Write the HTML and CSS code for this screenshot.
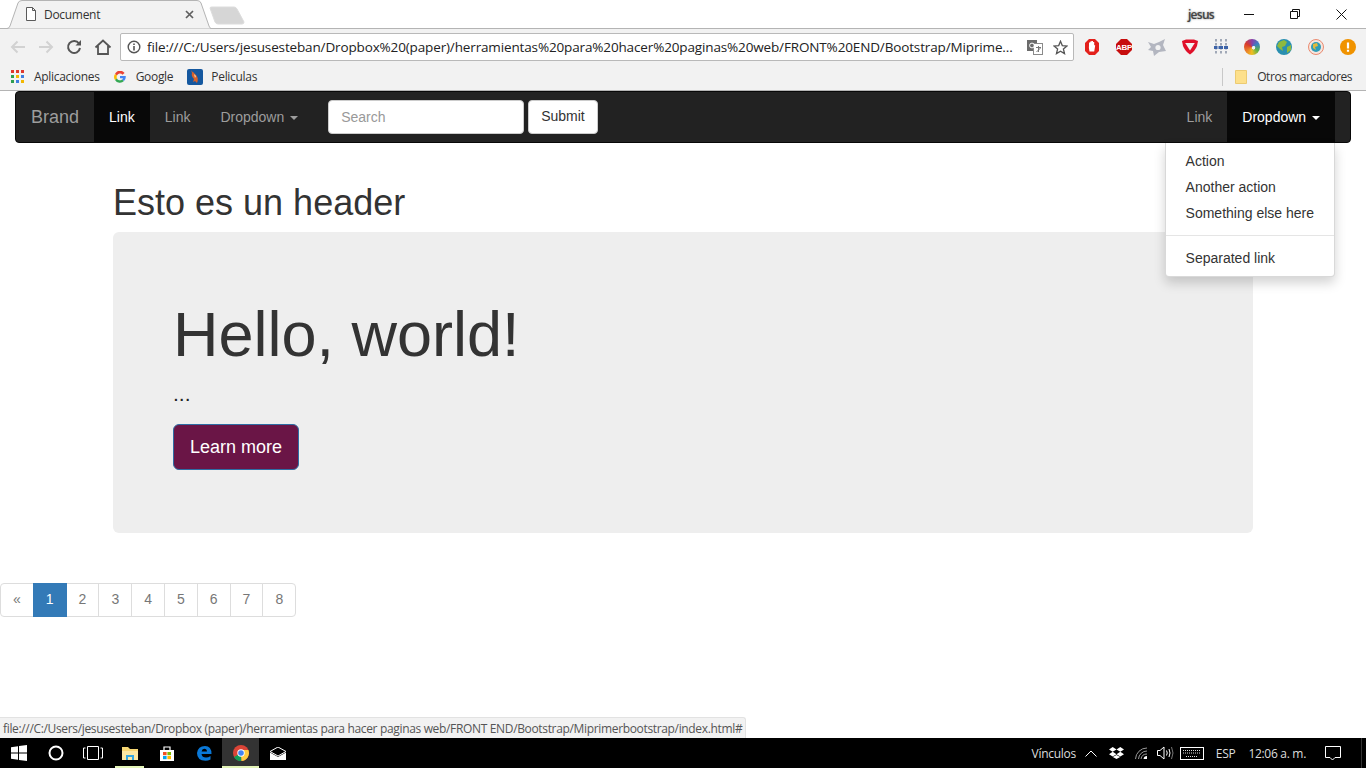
FILE: index.html
```html
<!DOCTYPE html>
<html lang="en">
<head>
    <meta charset="utf-8" />
    <title>Document</title>
    <link rel="stylesheet" href="styles.css">
</head>
<body>
<header class="chrome">
    <div class="tabstrip">
        <div class="tab">
            <svg class="tab-shape" width="207" height="29" viewBox="0 0 207 29">
                <path d="M0,28.5 H3 Q5,28.5 6,26 L14,3 Q15,0.5 18,0.5 H193 Q196,0.5 197,3 L205,26 Q206,28.5 207,28.5" fill="#f2f2f2" stroke="#b4b4b4"/>
            </svg>
            <svg class="tab-icon" width="12" height="14" viewBox="0 0 12 14">
                <path d="M1.5,.5 H7.5 L10.5,3.5 V13.5 H1.5 Z M7.5,.5 V3.5 H10.5" fill="#fff" stroke="#5a5a5a"/>
            </svg>
            <span class="tab-title">Document</span>
            <svg class="tab-close" width="9" height="9" viewBox="0 0 9 9">
                <path d="M1,1 L8,8 M8,1 L1,8" stroke="#5f5f5f" stroke-width="1.7"/>
            </svg>
        </div>
        <svg class="new-tab" width="36" height="20" viewBox="0 0 36 20">
            <path d="M1,2 Q1,1 3,1 H25 Q27,1 28,3 L35,16 Q35,18 33,18 H9 Q7,18 6,16 Z" fill="#d6d6d6" stroke="#dcdcdc"/>
        </svg>
        <span class="user-name">jesus</span>
        <div class="window-buttons">
            <svg width="10" height="10" viewBox="0 0 10 10"><path d="M0,5.5 H10" stroke="#111"/></svg>
            <svg width="10" height="10" viewBox="0 0 10 10"><path d="M.5,2.5 H7.5 V9.5 H.5 Z M2.5,2.5 V.5 H9.5 V7.5 H7.5" fill="none" stroke="#111"/></svg>
            <svg width="11" height="11" viewBox="0 0 11 11"><path d="M.5,.5 L10.5,10.5 M10.5,.5 L.5,10.5" stroke="#111"/></svg>
        </div>
    </div>

    <div class="toolbar">
        <svg class="tool" width="16" height="14" viewBox="0 0 16 14"><path d="M15,7 H2 M7.5,1.5 L2,7 L7.5,12.5" fill="none" stroke="#d2d2d2" stroke-width="2"/></svg>
        <svg class="tool" width="16" height="14" viewBox="0 0 16 14"><path d="M1,7 H14 M8.5,1.5 L14,7 L8.5,12.5" fill="none" stroke="#d2d2d2" stroke-width="2"/></svg>
        <svg class="tool" width="16" height="16" viewBox="0 0 16 16"><path d="M13,4.5 A6,6 0 1 0 14,9" fill="none" stroke="#555" stroke-width="2"/><path d="M9.5,6.5 H15 V1 Z" fill="#555"/></svg>
        <svg class="tool" width="18" height="16" viewBox="0 0 18 16"><path d="M1.5,8.5 L9,1.5 L16.5,8.5 M4,7 V15 H14 V7" fill="none" stroke="#555" stroke-width="1.8"/></svg>
        <div class="omnibox">
            <svg class="info" width="14" height="14" viewBox="0 0 14 14"><circle cx="7" cy="7" r="5.8" fill="none" stroke="#555" stroke-width="1.4"/><path d="M7,6 V10.5 M7,3.4 V5" stroke="#555" stroke-width="1.6"/></svg>
            <span class="url">file:///C:/Users/jesusesteban/Dropbox%20(paper)/herramientas%20para%20hacer%20paginas%20web/FRONT%20END/Bootstrap/Miprime...</span>
            <svg class="translate" width="16" height="15" viewBox="0 0 16 15">
                <rect x="0" y="0" width="10" height="11" fill="#6b6b6b"/>
                <rect x="6.5" y="3.5" width="9" height="11" fill="#fff" stroke="#8a8a8a"/>
                <circle cx="5" cy="5.5" r="2.4" fill="none" stroke="#fff"/>
                <path d="M9,7.5 H14 M11.5,6 V12 M9.5,12 L13.5,8" stroke="#777" fill="none"/>
            </svg>
            <svg class="star" width="15" height="15" viewBox="0 0 15 15"><path d="M7.5,1.3 L9.3,5.6 L14,6 L10.4,9 L11.5,13.6 L7.5,11.2 L3.5,13.6 L4.6,9 L1,6 L5.7,5.6 Z" fill="none" stroke="#555" stroke-width="1.3"/></svg>
        </div>
        <div class="extensions">
            <svg width="16" height="18" viewBox="0 0 16 18"><path d="M5,1 H11 L15,5 V13 L11,17 H5 L1,13 V5 Z" fill="#e3211c"/><path d="M5.5,13.5 Q4.5,10 5,7 V4.5 H6.2 V3.5 H7.4 V3 H9 V4 H10.2 V7 L11.2,7.5 L10.2,13.5 Z" fill="#fff"/></svg>
            <svg width="16" height="16" viewBox="0 0 16 16"><path d="M5,0 H11 L16,5 V11 L11,16 H5 L0,11 V5 Z" fill="#c70d0d"/><text class="abp" x="8" y="11" text-anchor="middle">ABP</text></svg>
            <svg width="18" height="17" viewBox="0 0 18 17"><path d="M0,3 L6,5 L11,3 L17,0 L15,6 L18,12 L11,13 L6,17 L5,12 L0,11 L3,8 Z" fill="#b3b6c0"/><circle cx="10" cy="8.5" r="2.6" fill="#f2f2f2"/></svg>
            <svg width="16" height="16" viewBox="0 0 16 16"><path d="M0,2 L4,0.5 H12 L16,2 L15,7 Q13,12 8,15.5 Q3,12 1,7 Z" fill="#e0102a"/><path d="M3.2,4 H12.8 L8,11.5 Z" fill="#f2f2f2"/></svg>
            <svg width="14" height="16" viewBox="0 0 14 16"><path d="M2,0 V16 M7,0 V16 M12,0 V16" stroke="#8c96a8" stroke-width="1.6" stroke-dasharray="2.5 1.5"/><rect x="0" y="7" width="14" height="3" fill="#3c63a8"/><path d="M4,7 V10 M9.5,7 V10" stroke="#f2f2f2"/></svg>
            <span class="swirl"></span>
            <svg width="16" height="16" viewBox="0 0 16 16"><circle cx="8" cy="8" r="8" fill="#2a8fb0"/><path d="M3,3 L8,1 L11,3 L9,7 L6,8 L7,12 L4,10 L1,7 Z M11,8 L15,6 L15,11 L11,14 Z" fill="#8eb93e"/></svg>
            <svg width="16" height="16" viewBox="0 0 16 16"><circle cx="8" cy="8" r="7.5" fill="#f5e6df" stroke="#ea8a70"/><circle cx="8" cy="8" r="5" fill="#2f9db8"/><path d="M5,5 L9,4 L10,7 L7,8 L8,11 L5,9 Z" fill="#e2b93b"/></svg>
            <svg width="16" height="16" viewBox="0 0 16 16"><circle cx="8" cy="8" r="8" fill="#f09300"/><path d="M8,3.5 V9.5 M8,10.8 V12.8" stroke="#fff" stroke-width="2.2"/></svg>
        </div>
    </div>

    <div class="bookmarks">
        <a class="bookmark">
            <svg class="apps" width="13" height="13" viewBox="0 0 13 13">
                <path d="M0,0h3v3h-3z M5,0h3v3h-3z" fill="#e0382c"/><path d="M10,0h3v3h-3z" fill="#e0382c"/>
                <path d="M0,5h3v3h-3z" fill="#2f9e4f"/><path d="M5,5h3v3h-3z" fill="#f2b700"/><path d="M10,5h3v3h-3z" fill="#3f7fe0"/>
                <path d="M0,10h3v3h-3z" fill="#2f9e4f"/><path d="M5,10h3v3h-3z" fill="#3f7fe0"/><path d="M10,10h3v3h-3z" fill="#f2b700"/>
            </svg>
            Aplicaciones
        </a>
        <a class="bookmark">
            <svg width="12" height="12" viewBox="0 0 12 12">
                <path d="M10.6,2 A5.6,5.6 0 0 0 1,2.9 L3,4.6 A3,3 0 0 1 8.4,3.8 Z" fill="#ea4335"/>
                <path d="M1,2.9 A5.6,5.6 0 0 0 1,9 L3,7.4 A3,3 0 0 1 3,4.6 Z" fill="#fbbc05"/>
                <path d="M1,9 A5.6,5.6 0 0 0 10,10 L8,8.4 A3,3 0 0 1 3,7.4 Z" fill="#34a853"/>
                <path d="M10,10 A5.6,5.6 0 0 0 11.7,5 H6 V7.2 H9 A2.6,2.6 0 0 1 8,8.4 Z" fill="#4285f4"/>
            </svg>
            Google
        </a>
        <a class="bookmark">
            <svg width="16" height="16" viewBox="0 0 16 16">
                <rect width="16" height="16" rx="2" fill="#15589f"/>
                <path d="M4,1 Q5,3 6,3 L9,6 Q12,9 10,14 L8,12 L6,13 L7,10 Q4,7 5,4 Z" fill="#d9622a"/>
                <path d="M7,5 L9,7 L8,9 Z" fill="#f4d9b0"/>
            </svg>
            Peliculas
        </a>
        <span class="bookmark-sep"></span>
        <a class="bookmark other">
            <svg width="12" height="14" viewBox="0 0 12 14"><path d="M.5,.5 H11.5 V13.5 H.5 Z" fill="#fde08b" stroke="#eccb72"/></svg>
            Otros marcadores
        </a>
    </div>
</header>

<main class="viewport">
    <nav class="navbar">
        <a class="brand">Brand</a>
        <ul class="nav">
            <li class="active"><a>Link</a></li>
            <li><a>Link</a></li>
            <li><a>Dropdown <span class="caret"></span></a></li>
        </ul>
        <form class="navbar-form">
            <input class="form-control" type="text" placeholder="Search">
            <button class="btn btn-default" type="button">Submit</button>
        </form>
        <ul class="nav nav-right">
            <li><a>Link</a></li>
            <li class="active open">
                <a>Dropdown <span class="caret"></span></a>
                <ul class="dropdown-menu">
                    <li><a>Action</a></li>
                    <li><a>Another action</a></li>
                    <li><a>Something else here</a></li>
                    <li class="divider"></li>
                    <li><a>Separated link</a></li>
                </ul>
            </li>
        </ul>
    </nav>

    <div class="container">
        <h1 class="page-title">Esto es un header</h1>
        <div class="jumbotron">
            <h1>Hello, world!</h1>
            <p>...</p>
            <p><a class="btn btn-lg">Learn more</a></p>
        </div>
    </div>

    <ul class="pagination">
        <li><a class="muted">&laquo;</a></li>
        <li class="active"><a>1</a></li>
        <li><a>2</a></li>
        <li><a>3</a></li>
        <li><a>4</a></li>
        <li><a>5</a></li>
        <li><a>6</a></li>
        <li><a>7</a></li>
        <li><a>8</a></li>
    </ul>

    <div class="status-bubble">file:///C:/Users/jesusesteban/Dropbox (paper)/herramientas para hacer paginas web/FRONT END/Bootstrap/Miprimerbootstrap/index.html#</div>
</main>

<footer class="taskbar">
    <div class="task-icons">
        <div class="task"><svg width="16" height="16" viewBox="0 0 16 16"><path d="M0,2.3 L7,1.3 V7.6 H0 Z M8,1.1 L16,0 V7.6 H8 Z M0,8.5 H7 V14.8 L0,13.8 Z M8,8.5 H16 V16 L8,14.9 Z" fill="#fff"/></svg></div>
        <div class="task"><svg width="16" height="16" viewBox="0 0 16 16"><circle cx="8" cy="8" r="6.5" fill="none" stroke="#fff" stroke-width="2"/></svg></div>
        <div class="task"><svg width="20" height="14" viewBox="0 0 20 14"><path d="M4.5,.5 H15.5 V13.5 H4.5 Z M2.5,2 H.5 V12 H2.5 M17.5,2 H19.5 V12 H17.5" fill="none" stroke="#fff"/></svg></div>
        <div class="task running"><svg width="16" height="15" viewBox="0 0 16 15"><path d="M0,1 H6 L8,3 H16 V14 H0 Z" fill="#f7d774"/><path d="M0,5 H16 V14 H0 Z" fill="#fbe7a3"/><path d="M4,14 V9 H12 V14 H10 V11 H6 V14 Z" fill="#35a6e0"/></svg></div>
        <div class="task"><svg width="14" height="15" viewBox="0 0 14 15"><path d="M0,4 H14 V15 H0 Z" fill="#fff"/><path d="M4,4 V1 H10 V4" fill="none" stroke="#fff" stroke-width="1.2"/><rect x="3" y="6" width="3.6" height="3.2" fill="#f25022"/><rect x="7.4" y="6" width="3.6" height="3.2" fill="#7fba00"/><rect x="3" y="10" width="3.6" height="3.2" fill="#00a4ef"/><rect x="7.4" y="10" width="3.6" height="3.2" fill="#ffb900"/></svg></div>
        <div class="task"><svg width="16" height="16" viewBox="0 0 16 16"><path d="M1,8 Q2,1 9,1 Q15.5,1 15.5,9 H5.5 Q6,12.5 10,12.5 Q12.5,12.5 14.5,11 V14.5 Q12,15.8 9.5,15.8 Q1,15.5 1,8 Z M5.6,6.5 H11 Q10.8,3.8 8.3,3.8 Q6,3.8 5.6,6.5 Z" fill="#0a78d7"/></svg></div>
        <div class="task running current"><svg width="16" height="16" viewBox="0 0 16 16"><circle cx="8" cy="8" r="8" fill="#db4437"/><path d="M8,8 L1,12 A8,8 0 0 0 8.5,16 Z" fill="#0f9d58"/><path d="M8,8 L8.5,16 A8,8 0 0 0 15.4,5 L8,5 Z" fill="#ffcd40"/><circle cx="8" cy="8" r="3.7" fill="#fff"/><circle cx="8" cy="8" r="2.8" fill="#4285f4"/></svg></div>
        <div class="task"><svg width="16" height="13" viewBox="0 0 16 13"><path d="M0,4.5 L8,0 L16,4.5 L8,9 Z" fill="#000" stroke="#fff"/><path d="M0,5.5 L8,10 L16,5.5 V13 H0 Z" fill="#fff"/></svg></div>
    </div>
    <div class="tray">
        <span class="tray-links">Vínculos</span>
        <svg class="tray-chevron" width="12" height="7" viewBox="0 0 12 7"><path d="M.5,6.5 L6,1 L11.5,6.5" fill="none" stroke="#fff"/></svg>
        <svg class="tray-dropbox" width="15" height="12" viewBox="0 0 15 12"><path d="M3.7,0 L7.5,2.4 L3.7,4.8 L0,2.4 Z M11.3,0 L15,2.4 L11.3,4.8 L7.5,2.4 Z M3.7,4.8 L7.5,7.2 L3.7,9.4 L0,7.2 Z M11.3,4.8 L15,7.2 L11.3,9.4 L7.5,7.2 Z M3.8,10 L7.5,8 L11.2,10 L7.5,12 Z" fill="#fff"/></svg>
        <svg class="tray-wifi" width="13" height="13" viewBox="0 0 13 13"><path d="M.5,12 A11.5,11.5 0 0 1 12,1 M3.5,12 A8.5,8.5 0 0 1 12,4 M6,12 A6,6 0 0 1 12,7" fill="none" stroke="#999"/><path d="M8.5,12 A3.5,3.5 0 0 1 12,9 V12 Z" fill="#fff"/></svg>
        <svg class="tray-sound" width="17" height="14" viewBox="0 0 17 14"><path d="M.5,4.5 H3 L7,1 V13 L3,9.5 H.5 Z" fill="none" stroke="#fff"/><path d="M9.5,4.5 Q11,7 9.5,9.5 M12,3 Q14,7 12,11" fill="none" stroke="#fff"/><path d="M14.5,1 Q17.5,7 14.5,13" fill="none" stroke="#777"/></svg>
        <svg class="tray-keyboard" width="24" height="13" viewBox="0 0 24 13"><rect x=".5" y=".5" width="23" height="12" fill="none" stroke="#fff"/><path d="M3,3.5 H21 M3,6 H21 M6,9.5 H18" stroke="#ddd" stroke-dasharray="1 1"/></svg>
        <span class="tray-lang">ESP</span>
        <span class="tray-clock">12:06 a. m.</span>
        <svg class="tray-notes" width="16" height="15" viewBox="0 0 16 15"><path d="M.5,.5 H15.5 V11.5 H10 L7.5,14 L5,11.5 H.5 Z" fill="none" stroke="#fff"/></svg>
        <span class="show-desktop"></span>
    </div>
</footer>
</body>
</html>
```

FILE: styles.css
```css
* { box-sizing: border-box; }

body {
    margin: 0;
    height: 768px;
    overflow: hidden;
    display: flex;
    flex-direction: column;
    background: #fff;
    font: 14px/1.42857 "Liberation Sans", Arial, sans-serif;
    color: #333;
}
a { text-decoration: none; color: inherit; }
ul { list-style: none; margin: 0; padding: 0; }

/* browser window */
.chrome {
    flex: none;
    height: 91px;
    background: #f2f2f2;
    border-bottom: 1px solid #b4b4b4;
    font: 12px "Open Sans", "Noto Sans", sans-serif;
    color: #333;
}
.tabstrip {
    height: 29px;
    display: flex;
    align-items: center;
    background: #fff;
    border-bottom: 1px solid #b4b4b4;
}
.tab {
    position: relative;
    width: 207px;
    height: 29px;
    margin-left: 4px;
    flex: none;
    display: flex;
    align-items: center;
    padding-left: 21px;
    z-index: 1;
}
.tab-shape { position: absolute; left: 0; top: 0; }
.tab-icon, .tab-title, .tab-close { position: relative; }
.tab-title { margin-left: 7px; letter-spacing: -.3px; }
.tab-close { margin-left: auto; margin-right: 17px; }
.new-tab { margin: 4px 0 0 -2px; }
.user-name {
    margin-left: auto;
    font-size: 12px;
    font-weight: 600;
    color: #444;
    letter-spacing: -.7px;
    text-shadow: 0 0 2px #777;
}
.window-buttons {
    display: flex;
    align-items: center;
    gap: 36px;
    margin: 0 19px 0 30px;
}

.toolbar {
    height: 34px;
    display: flex;
    align-items: center;
    padding: 2px 0 0 10px;
}
.tool { margin-right: 12px; }
.tool:nth-child(4) { margin-right: 8px; }
.omnibox {
    width: 954px;
    height: 28px;
    display: flex;
    align-items: center;
    background: #fff;
    border: 1px solid #b9b9b9;
    border-radius: 2px;
    padding: 0 5px 0 6px;
}
.url {
    margin-left: 6px;
    flex: 1;
    font-size: 13.5px;
    white-space: nowrap;
    overflow: hidden;
    color: #222;
    letter-spacing: -.14px;
}
.translate { margin: 0 10px 0 7px; flex: none; }
.star { flex: none; }
.extensions {
    flex: 1;
    display: flex;
    align-items: center;
    justify-content: space-between;
    padding: 0 10px;
}
.swirl {
    width: 16px;
    height: 16px;
    border-radius: 50%;
    background:
        radial-gradient(circle at 60% 55%, #f2f2f2 0 1.5px, transparent 2px),
        conic-gradient(#8a3fa8, #3c7fc4, #5ab04a, #f0c020, #e8792b, #d9392b, #8a3fa8);
}

.bookmarks {
    height: 27px;
    display: flex;
    align-items: center;
    padding: 0 14px 0 11px;
}
.bookmark {
    display: flex;
    align-items: center;
    gap: 10px;
    margin-right: 14px;
    letter-spacing: -.3px;
    white-space: nowrap;
}
.bookmark:nth-child(3) { gap: 8px; }
.bookmark-sep {
    margin-left: auto;
    width: 1px;
    height: 18px;
    background: #c8c8c8;
}
.other { margin: 0 0 0 12px; letter-spacing: -.42px; }
.abp {
    font: bold 8px "Liberation Sans", sans-serif;
    letter-spacing: -.3px;
    fill: #fff;
}

/* page */
.viewport {
    flex: 1;
    position: relative;
    min-height: 0;
}
.navbar {
    display: flex;
    height: 52px;
    margin: 0 15px 20px;
    background: #222;
    border: 1px solid #080808;
    border-radius: 4px;
    color: #9d9d9d;
}
.brand {
    padding: 15px;
    font-size: 18px;
    line-height: 20px;
}
.nav { display: flex; }
.nav > li { position: relative; }
.nav > li > a {
    display: block;
    padding: 15px;
    line-height: 20px;
}
.nav > li.active > a {
    color: #fff;
    background: #080808;
}
.nav-right { margin-left: auto; margin-right: 15px; }
.caret {
    display: inline-block;
    width: 0;
    height: 0;
    margin-left: 2px;
    vertical-align: middle;
    border-top: 4px solid;
    border-right: 4px solid transparent;
    border-left: 4px solid transparent;
}
.navbar-form {
    display: flex;
    gap: 4px;
    padding: 8px 15px;
}
.form-control {
    width: 196px;
    height: 34px;
    padding: 6px 12px;
    font: inherit;
    color: #555;
    background: #fff;
    border: 1px solid #ccc;
    border-radius: 4px;
}
.form-control::placeholder { color: #999; }
.btn {
    display: inline-block;
    padding: 6px 12px;
    font: inherit;
    border: 1px solid #ccc;
    border-radius: 4px;
    background: #fff;
    color: #333;
}
.dropdown-menu {
    position: absolute;
    top: 100%;
    right: 0;
    min-width: 160px;
    margin-top: 1px;
    padding: 6px 0 4px;
    background: #fff;
    border: 1px solid rgba(0, 0, 0, .15);
    border-top: 0;
    border-radius: 0 0 4px 4px;
    box-shadow: 0 6px 12px rgba(0, 0, 0, .175);
    z-index: 10;
    white-space: nowrap;
}
.dropdown-menu a {
    display: block;
    padding: 3px 20px;
    color: #333;
}
.divider {
    height: 1px;
    margin: 8px 0 10px;
    background: #e5e5e5;
}

.container {
    display: flow-root;
    width: 1170px;
    margin: 0 auto;
    padding: 0 15px;
}
.page-title {
    margin: 20px 0 10px;
    font-size: 36px;
    font-weight: 500;
    line-height: 39px;
}
.jumbotron {
    padding: 48px 60px;
    margin-bottom: 30px;
    background: #eee;
    border-radius: 6px;
}
.jumbotron h1 {
    margin: 20px 0 10px;
    font-size: 63px;
    font-weight: 500;
    line-height: 1.1;
}
.jumbotron p {
    margin: 0 0 15px;
    font-size: 21px;
    font-weight: 200;
    color: #222;
}
.btn-lg {
    padding: 11px 16px 9px;
    font-size: 18px;
    line-height: 1.33333;
    border-radius: 6px;
    color: #fff;
    background: #6a1546;
    border-color: #2e6da4;
    display: block;
    width: fit-content;
}

.pagination {
    display: flex;
    margin: 20px 0;
}
.pagination a {
    display: block;
    padding: 6px 12px;
    margin-left: -1px;
    color: #777;
    background: #fff;
    border: 1px solid #ddd;
}
.pagination li:first-child a {
    margin-left: 0;
    border-radius: 4px 0 0 4px;
}
.pagination li:last-child a { border-radius: 0 4px 4px 0; }
.pagination .active a {
    position: relative;
    color: #fff;
    background: #337ab7;
    border-color: #337ab7;
}
.status-bubble {
    position: absolute;
    left: 0;
    bottom: 0;
    height: 21px;
    padding: 2px 3px 0;
    background: #f2f2f2;
    border: 1px solid #e2e2e2;
    border-width: 1px 1px 0 0;
    border-radius: 0 3px 0 0;
    font: 12px/17px "Open Sans", "Noto Sans", sans-serif;
    color: #555;
    letter-spacing: -.34px;
    white-space: nowrap;
}

/* windows taskbar */
.taskbar {
    flex: none;
    height: 30px;
    display: flex;
    justify-content: space-between;
    background: #000;
    color: #ddd;
    font: 12px "Open Sans", "Noto Sans", sans-serif;
}
.task-icons { display: flex; }
.task {
    width: 37px;
    display: flex;
    align-items: center;
    justify-content: center;
    position: relative;
}
.task.current { background: #333; }
.task.running::after {
    content: "";
    position: absolute;
    left: 0;
    right: 0;
    bottom: 0;
    height: 2px;
    margin: 0 4px;
    background: #e4f5b8;
}
.task.current::after { margin: 0; }
.tray {
    display: flex;
    align-items: center;
    padding-right: 4px;
    letter-spacing: -.3px;
}
.tray-chevron { margin-left: 9px; }
.tray-dropbox { margin-left: 12px; }
.tray-wifi { margin-left: 11px; }
.tray-sound { margin-left: 9px; }
.tray-keyboard { margin-left: 6px; }
.tray-lang { margin-left: 12px; }
.tray-clock { margin-left: 13px; }
.tray-notes { margin-left: 19px; }
.show-desktop {
    width: 1px;
    height: 30px;
    margin-left: 20px;
    background: #333;
}
```
